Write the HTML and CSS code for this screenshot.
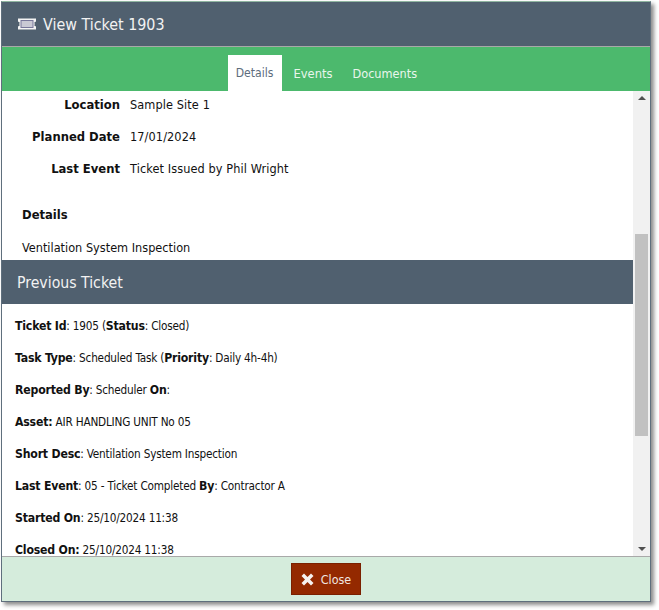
FILE: index.html
```html
<!DOCTYPE html>
<html lang="en">
<head>
<meta charset="utf-8">
<title>View Ticket 1903</title>
<link rel="stylesheet" href="styles.css">
</head>
<body>
<div class="dialog">
  <header class="title-bar">
    <svg class="ticket-icon" viewBox="0 0 20 14" width="20" height="14" aria-hidden="true">
      <path fill="#f4f4f4" d="M1 1.500h18v3.300a.9.9 0 0 0-.9 2.200.9.9 0 0 0 .9 2.200v3.300H1V9.200A.9.9 0 0 0 1.900 7 .9.9 0 0 0 1 4.800z"/>
      <rect x="4" y="3.500" width="12" height="7" fill="#c9c9d4" stroke="#77779a"/>
    </svg>
    <h1 class="title">View Ticket 1903</h1>
  </header>
  <nav class="tabs">
    <a class="tab active">Details</a>
    <a class="tab">Events</a>
    <a class="tab docs">Documents</a>
  </nav>
  <div class="body">
    <main class="content">
      <dl class="fields">
        <div class="field"><dt>Location</dt><dd>Sample Site 1</dd></div>
        <div class="field"><dt>Planned Date</dt><dd>17/01/2024</dd></div>
        <div class="field"><dt>Last Event</dt><dd>Ticket Issued by Phil Wright</dd></div>
      </dl>
      <h2 class="details-head">Details</h2>
      <p class="details-text">Ventilation System Inspection</p>
      <h2 class="panel-head">Previous Ticket</h2>
      <div class="prev">
        <p><b>Ticket Id</b>: 1905 (<b>Status</b>: Closed)</p>
        <p><b>Task Type</b>: Scheduled Task (<b>Priority</b>: Daily 4h-4h)</p>
        <p><b>Reported By</b>: Scheduler <b>On</b>:</p>
        <p><b>Asset:</b> AIR HANDLING UNIT No 05</p>
        <p><b>Short Desc</b>: Ventilation System Inspection</p>
        <p><b>Last Event</b>: 05 - Ticket Completed <b>By</b>: Contractor A</p>
        <p><b>Started On</b>: 25/10/2024 11:38</p>
        <p><b>Closed On:</b> 25/10/2024 11:38</p>
      </div>
    </main>
    <div class="scrollbar">
      <span class="arrow up"></span>
      <span class="thumb"></span>
      <span class="arrow down"></span>
    </div>
  </div>
  <footer class="footer">
    <button class="close-btn" type="button">
      <svg viewBox="0 0 13 13" width="13" height="13" aria-hidden="true">
        <path fill="#f6f2f0" d="M3 .5 6.500 4 10 .5 12.500 3 9 6.500l3.500 3.500-2.500 2.500L6.500 9 3 12.500.5 10 4 6.500.5 3z"/>
      </svg>
      Close
    </button>
  </footer>
</div>
</body>
</html>
```

FILE: styles.css
```css
* { box-sizing: border-box; }
html, body { margin: 0; padding: 0; background: #fff; }
body {
  width: 659px;
  height: 610px;
  padding: 1px 0 0 1px;
  font-family: "DejaVu Sans Condensed", "DejaVu Sans", sans-serif;
  font-size: 12.6px;
  color: #111;
}
.dialog {
  width: 650px;
  height: 601px;
  display: flex;
  flex-direction: column;
  border: 1px solid #5f6f7d;
  border-top-color: #8fb5a0;
  box-shadow: 3px 3px 4px rgba(0,0,0,.45);
  background: #fff;
}
.title-bar {
  height: 45px;
  flex: none;
  display: flex;
  align-items: center;
  gap: 5px;
  padding-left: 15px;
  background: #50606f;
  border-bottom: 1px solid #a9a9a9;
  color: #f2f2f2;
}
.ticket-icon { flex: none; }
.title { margin: 0 0 0 1px; font-size: 15.9px; font-weight: 400; }
.tabs {
  height: 44px;
  flex: none;
  display: flex;
  justify-content: center;
  align-items: flex-end;
  padding-left: 1px;
  background: #4cb96d;
  font-size: 12.8px;
}
.tab {
  height: 36px;
  padding: 0 8px;
  display: flex;
  align-items: center;
  color: #e9f6ec;
}
.tab.active { width: 54px; justify-content: center; padding: 0; background: #fff; color: #5d6d7c; font-size: 12.1px; }
.tab:nth-child(2) { padding: 0 12px; }
.tab.docs { width: 81px; padding: 0 0 0 8px; font-size: 12.6px; }
.body { flex: 1; min-height: 0; display: flex; overflow: hidden; }
.content { flex: 1; min-width: 0; overflow: hidden; }
.fields { margin: -3px 0 0; }
.field { display: flex; height: 32px; align-items: center; }
.field dt { width: 118px; text-align: right; font-weight: 700; font-size: 12.9px; }
.field dd { margin: 0 0 0 10px; letter-spacing: .1px; }
.details-head { margin: 23px 0 0 20px; font-size: 12.9px; font-weight: 700; line-height: 16px; }
.details-text { margin: 17px 0 0 20px; line-height: 16px; }
.panel-head {
  margin: 4px 0 0;
  height: 44px;
  display: flex;
  align-items: center;
  padding-left: 15px;
  background: #50606f;
  color: #f2f2f2;
  font-size: 15.7px;
  font-weight: 400;
}
.prev { padding: 6px 0 0 13px; font-size: 11.7px; letter-spacing: -.2px; }
.prev b { font-size: 12.2px; letter-spacing: -.2px; }
.prev p { margin: 0; height: 32px; line-height: 32px; white-space: nowrap; }
.scrollbar {
  width: 17px;
  flex: none;
  display: flex;
  flex-direction: column;
  align-items: center;
  background: #f1f1f1;
}
.arrow { flex: none; width: 0; height: 0; border-left: 4px solid transparent; border-right: 4px solid transparent; }
.arrow.up { margin-top: 5px; border-bottom: 4px solid #505050; }
.arrow.down { margin-top: auto; margin-bottom: 5px; border-top: 4px solid #505050; }
.thumb { flex: none; width: 13px; height: 202px; margin-top: 134px; background: #c1c1c1; }
.footer {
  height: 45px;
  flex: none;
  display: flex;
  justify-content: center;
  align-items: center;
  background: #d5ecdc;
  border-top: 1px solid #a9a9a9;
}
.close-btn {
  width: 70px;
  height: 32px;
  display: flex;
  align-items: center;
  justify-content: center;
  gap: 7px;
  padding: 0;
  background: #942900;
  border: 1px solid #7a2000;
  color: #f0e6e0;
  font: inherit;
  font-size: 12.4px;
}
```
